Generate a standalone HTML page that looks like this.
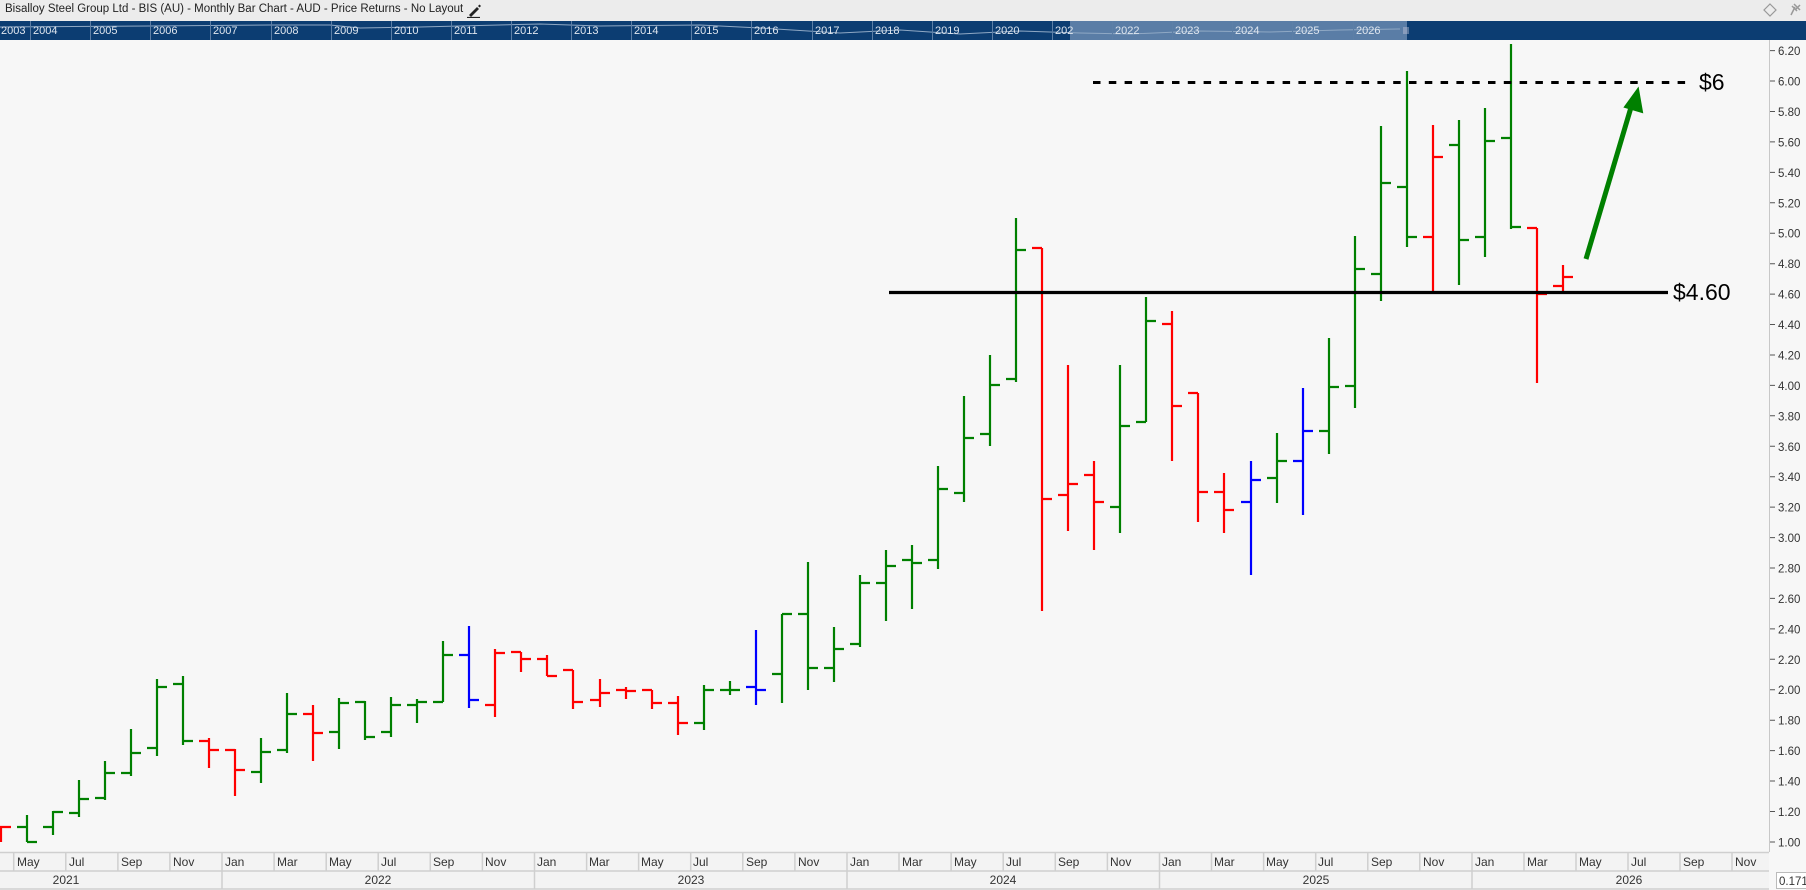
<!DOCTYPE html>
<html><head><meta charset="utf-8"><style>
*{margin:0;padding:0;box-sizing:border-box}
body{width:1806px;height:890px;overflow:hidden;background:#f7f7f7;font-family:"Liberation Sans",sans-serif;position:relative}
.t{position:absolute;white-space:nowrap}
</style></head><body>
<div style="position:absolute;left:0;top:0;width:1806px;height:21px;background:#ececec"></div>
<div class="t" style="left:5px;top:3px;font-size:11.5px;color:#222">Bisalloy Steel Group Ltd - BIS (AU) - Monthly Bar Chart - AUD - Price Returns - No Layout</div>
<svg style="position:absolute;left:466px;top:3px" width="16" height="15"><path d="M3 12 L11 4 L13 6 L5 14 Z" fill="#222"/><path d="M12 3 L13.5 1.5 L15 3 L13.5 4.5Z" fill="#222"/><path d="M1 14.5 H14" stroke="#222" stroke-width="1.2"/></svg>
<svg style="position:absolute;left:1762px;top:2px" width="44" height="18"><path d="M8 2 L14 8 L8 14 L2 8Z" fill="none" stroke="#999" stroke-width="1.2"/><path d="M30 4 L35 9 M32 2 L38 8 M33 5 L29 13 M34 7 L38 3" stroke="#999" stroke-width="1.5" fill="none"/></svg>
<svg style="position:absolute;left:0;top:21px" width="1806" height="19">
<rect width="1806" height="19" fill="#0c3d72"/>
<rect x="1070" width="337" height="19" fill="#5a7da6"/>
<path d="M0 6 L150 5 L270 4 L330 4 L360 7 L420 6 L540 3 L600 5 L700 4 L760 7 L840 12 L900 9 L960 13 L1020 10 L1080 12 L1130 13 L1200 10 L1270 11 L1340 9 L1400 8" fill="none" stroke="#8fa8c4" stroke-width="1"/>
<g stroke="#5d7fa6" stroke-width="1">
<path d="M30.5 0V19M90.5 0V19M150.5 0V19M210.5 0V19M271.5 0V19M331.5 0V19M391.5 0V19M451.5 0V19M511.5 0V19M571.5 0V19M631.5 0V19M691.5 0V19M751.5 0V19M812.5 0V19M872.5 0V19M932.5 0V19M992.5 0V19M1052.5 0V19M1112.5 0V19M1172.5 0V19M1232.5 0V19M1292.5 0V19M1353.5 0V19"/>
</g>
<path d="M1404 6V13M1406 6V13M1408 6V13" stroke="#ccd" stroke-width="0.8"/>
<g font-size="11" fill="#dfe6ef" font-family="Liberation Sans,sans-serif">
<text x="1" y="13">2003</text><text x="33" y="13">2004</text><text x="93" y="13">2005</text><text x="153" y="13">2006</text><text x="213" y="13">2007</text><text x="274" y="13">2008</text><text x="334" y="13">2009</text><text x="394" y="13">2010</text><text x="454" y="13">2011</text><text x="514" y="13">2012</text><text x="574" y="13">2013</text><text x="634" y="13">2014</text><text x="694" y="13">2015</text><text x="754" y="13">2016</text><text x="815" y="13">2017</text><text x="875" y="13">2018</text><text x="935" y="13">2019</text><text x="995" y="13">2020</text><text x="1055" y="13">202</text><text x="1115" y="13">2022</text><text x="1175" y="13">2023</text><text x="1235" y="13">2024</text><text x="1295" y="13">2025</text><text x="1356" y="13">2026</text>
</g></svg>

<svg style="position:absolute;left:0;top:0" width="1806" height="890">
<line x1="1769.5" y1="40" x2="1769.5" y2="852" stroke="#c8c8c8"/>
<g stroke="#555" stroke-width="1">
<path d="M1770 50.6h5M1770 81h5M1770 111.5h5M1770 141.9h5M1770 172.4h5M1770 202.8h5M1770 233.2h5M1770 263.7h5M1770 294.1h5M1770 324.5h5M1770 355h5M1770 385.4h5M1770 415.8h5M1770 446.3h5M1770 476.7h5M1770 507.1h5M1770 537.6h5M1770 568h5M1770 598.4h5M1770 628.9h5M1770 659.3h5M1770 689.7h5M1770 720.2h5M1770 750.6h5M1770 781h5M1770 811.5h5M1770 842h5"/>
</g>
<g font-size="11.5" fill="#333" font-family="Liberation Sans,sans-serif">
<text x="1778" y="55">6.20</text><text x="1778" y="85.5">6.00</text><text x="1778" y="116">5.80</text><text x="1778" y="146.4">5.60</text><text x="1778" y="176.9">5.40</text><text x="1778" y="207.3">5.20</text><text x="1778" y="237.7">5.00</text><text x="1778" y="268.2">4.80</text><text x="1778" y="298.6">4.60</text><text x="1778" y="329">4.40</text><text x="1778" y="359.5">4.20</text><text x="1778" y="389.9">4.00</text><text x="1778" y="420.3">3.80</text><text x="1778" y="450.8">3.60</text><text x="1778" y="481.2">3.40</text><text x="1778" y="511.6">3.20</text><text x="1778" y="542.1">3.00</text><text x="1778" y="572.5">2.80</text><text x="1778" y="602.9">2.60</text><text x="1778" y="633.4">2.40</text><text x="1778" y="663.8">2.20</text><text x="1778" y="694.2">2.00</text><text x="1778" y="724.7">1.80</text><text x="1778" y="755.1">1.60</text><text x="1778" y="785.5">1.40</text><text x="1778" y="816">1.20</text><text x="1778" y="846.5">1.00</text>
</g>

<rect x="0" y="852" width="1769" height="37" fill="#f3f3f3"/>
<g stroke="#cfcfcf" stroke-width="1.5" fill="none">
<path d="M0 852.5H1769M0 871H1769M0 889H1769"/>
<path d="M13.7 852V871M65.8 852V871M117.9 852V871M169.9 852V871M222 852V871M274.1 852V871M326.2 852V871M378.2 852V871M430.3 852V871M482.4 852V871M534.5 852V871M586.6 852V871M638.6 852V871M690.7 852V871M742.8 852V871M794.9 852V871M847 852V871M899 852V871M951.1 852V871M1003.2 852V871M1055.3 852V871M1107.4 852V871M1159.5 852V871M1211.5 852V871M1263.6 852V871M1315.7 852V871M1367.8 852V871M1419.8 852V871M1472 852V871M1524 852V871M1576 852V871M1628 852V871M1680 852V871M1732 852V871"/>
<path d="M222 871V889M534.5 871V889M847 871V889M1159.5 871V889M1472 871V889"/>
</g>
<g font-size="12" fill="#333" font-family="Liberation Sans,sans-serif">
<text x="17" y="866">May</text><text x="69" y="866">Jul</text><text x="121" y="866">Sep</text><text x="173" y="866">Nov</text><text x="225" y="866">Jan</text><text x="277" y="866">Mar</text><text x="329" y="866">May</text><text x="381" y="866">Jul</text><text x="433" y="866">Sep</text><text x="485" y="866">Nov</text><text x="537" y="866">Jan</text><text x="589" y="866">Mar</text><text x="641" y="866">May</text><text x="693" y="866">Jul</text><text x="746" y="866">Sep</text><text x="798" y="866">Nov</text><text x="850" y="866">Jan</text><text x="902" y="866">Mar</text><text x="954" y="866">May</text><text x="1006" y="866">Jul</text><text x="1058" y="866">Sep</text><text x="1110" y="866">Nov</text><text x="1162" y="866">Jan</text><text x="1214" y="866">Mar</text><text x="1266" y="866">May</text><text x="1318" y="866">Jul</text><text x="1371" y="866">Sep</text><text x="1423" y="866">Nov</text><text x="1475" y="866">Jan</text><text x="1527" y="866">Mar</text><text x="1579" y="866">May</text><text x="1631" y="866">Jul</text><text x="1683" y="866">Sep</text><text x="1735" y="866">Nov</text>
</g>
<g font-size="12" fill="#333" font-family="Liberation Sans,sans-serif" text-anchor="middle">
<text x="66" y="884">2021</text><text x="378" y="884">2022</text><text x="691" y="884">2023</text><text x="1003" y="884">2024</text><text x="1316" y="884">2025</text><text x="1629" y="884">2026</text>
</g>
<rect x="1776.5" y="872.5" width="32" height="16" fill="#fff" stroke="#bbb"/>
<text x="1779" y="885" font-size="11.5" fill="#333" font-family="Liberation Sans,sans-serif">0.171</text>

<g fill="none" stroke-width="2.2">
<g stroke="#ff0000">
<path d="M1 827V842M-9 827H1M1 827H11"/>
<path d="M209 738V768M199 741H209M209 750H219"/>
<path d="M235 749V796M225 750H235M235 770H245"/>
<path d="M313 705V761M303 714H313M313 733H323"/>
<path d="M495 649V717M485 705H495M495 653H505"/>
<path d="M521 652V672M511 652H521M521 659H531"/>
<path d="M547 655V676M537 659H547M547 676H557"/>
<path d="M573 670V709M563 670H573M573 702H583"/>
<path d="M600 679V707M590 700H600M600 693H610"/>
<path d="M626 687V699M616 690H626M626 691H636"/>
<path d="M652 690V709M642 690H652M652 703H662"/>
<path d="M678 696V735M668 703H678M678 723H688"/>
<path d="M1042 248V611M1032 248H1042M1042 499H1052"/>
<path d="M1068 365V531M1058 495H1068M1068 484H1078"/>
<path d="M1094 461V550M1084 475H1094M1094 502H1104"/>
<path d="M1172 311V461M1162 324H1172M1172 406H1182"/>
<path d="M1198 393V522M1188 393H1198M1198 492H1208"/>
<path d="M1224 473V533M1214 492H1224M1224 510H1234"/>
<path d="M1433 125V292M1423 237H1433M1433 157H1443"/>
<path d="M1537 228V383M1527 228H1537M1537 294H1547"/>
<path d="M1563 265V292M1553 286H1563M1563 277H1573"/>
</g>
<g stroke="#0000ff">
<path d="M469 626V708M459 655H469M469 700H479"/>
<path d="M756 630V705M746 687H756M756 690H766"/>
<path d="M1251 461V575M1241 502H1251M1251 480H1261"/>
<path d="M1303 388V515M1293 461H1303M1303 431H1313"/>
</g>
<g stroke="#008000">
<path d="M27 815V842M17 827H27M27 842H37"/>
<path d="M53 811V835M43 827H53M53 812H63"/>
<path d="M79 780V817M69 813H79M79 799H89"/>
<path d="M105 761V800M95 798H105M105 773H115"/>
<path d="M131 729V776M121 773H131M131 753H141"/>
<path d="M157 679V756M147 748H157M157 687H167"/>
<path d="M183 676V745M173 684H183M183 741H193"/>
<path d="M261 738V783M251 772H261M261 752H271"/>
<path d="M287 693V753M277 750H287M287 714H297"/>
<path d="M339 698V749M329 732H339M339 703H349"/>
<path d="M365 701V740M355 702H365M365 737H375"/>
<path d="M391 697V737M381 732H391M391 705H401"/>
<path d="M417 699V723M407 705H417M417 702H427"/>
<path d="M443 641V702M433 702H443M443 655H453"/>
<path d="M704 685V730M694 723H704M704 690H714"/>
<path d="M730 681V695M720 690H730M730 690H740"/>
<path d="M782 614V703M772 674H782M782 614H792"/>
<path d="M808 562V690M798 614H808M808 668H818"/>
<path d="M834 627V682M824 668H834M834 649H844"/>
<path d="M860 575V647M850 644H860M860 583H870"/>
<path d="M886 550V621M876 583H886M886 566H896"/>
<path d="M912 545V609M902 560H912M912 563H922"/>
<path d="M938 466V569M928 560H938M938 489H948"/>
<path d="M964 396V502M954 493H964M964 438H974"/>
<path d="M990 355V446M980 434H990M990 385H1000"/>
<path d="M1016 218V382M1006 379H1016M1016 250H1026"/>
<path d="M1120 365V533M1110 507H1120M1120 426H1130"/>
<path d="M1146 297V422M1136 422H1146M1146 321H1156"/>
<path d="M1277 433V503M1267 478H1277M1277 461H1287"/>
<path d="M1329 338V454M1319 431H1329M1329 387H1339"/>
<path d="M1355 236V408M1345 386H1355M1355 269H1365"/>
<path d="M1381 126V301M1371 274H1381M1381 183H1391"/>
<path d="M1407 71V247M1397 187H1407M1407 237H1417"/>
<path d="M1459 120V285M1449 145H1459M1459 240H1469"/>
<path d="M1485 108V257M1475 237H1485M1485 141H1495"/>
<path d="M1511 44V229M1501 138H1511M1511 227H1521"/>
</g>
</g>

<line x1="889" y1="292.5" x2="1668" y2="292.5" stroke="#000" stroke-width="3.2"/>
<line x1="1093" y1="82.5" x2="1692" y2="82.5" stroke="#000" stroke-width="3" stroke-dasharray="7.5 8.3"/>
<text x="1673" y="300" font-size="23" fill="#000" font-family="Liberation Sans,sans-serif">$4.60</text>
<text x="1699" y="90" font-size="23" fill="#000" font-family="Liberation Sans,sans-serif">$6</text>
<line x1="1586" y1="259" x2="1632" y2="104" stroke="#008000" stroke-width="5"/>
<path d="M1638 89 L1642 112 L1625 107 Z" fill="#008000" stroke="#008000" stroke-width="2"/>
</svg>
</body></html>
